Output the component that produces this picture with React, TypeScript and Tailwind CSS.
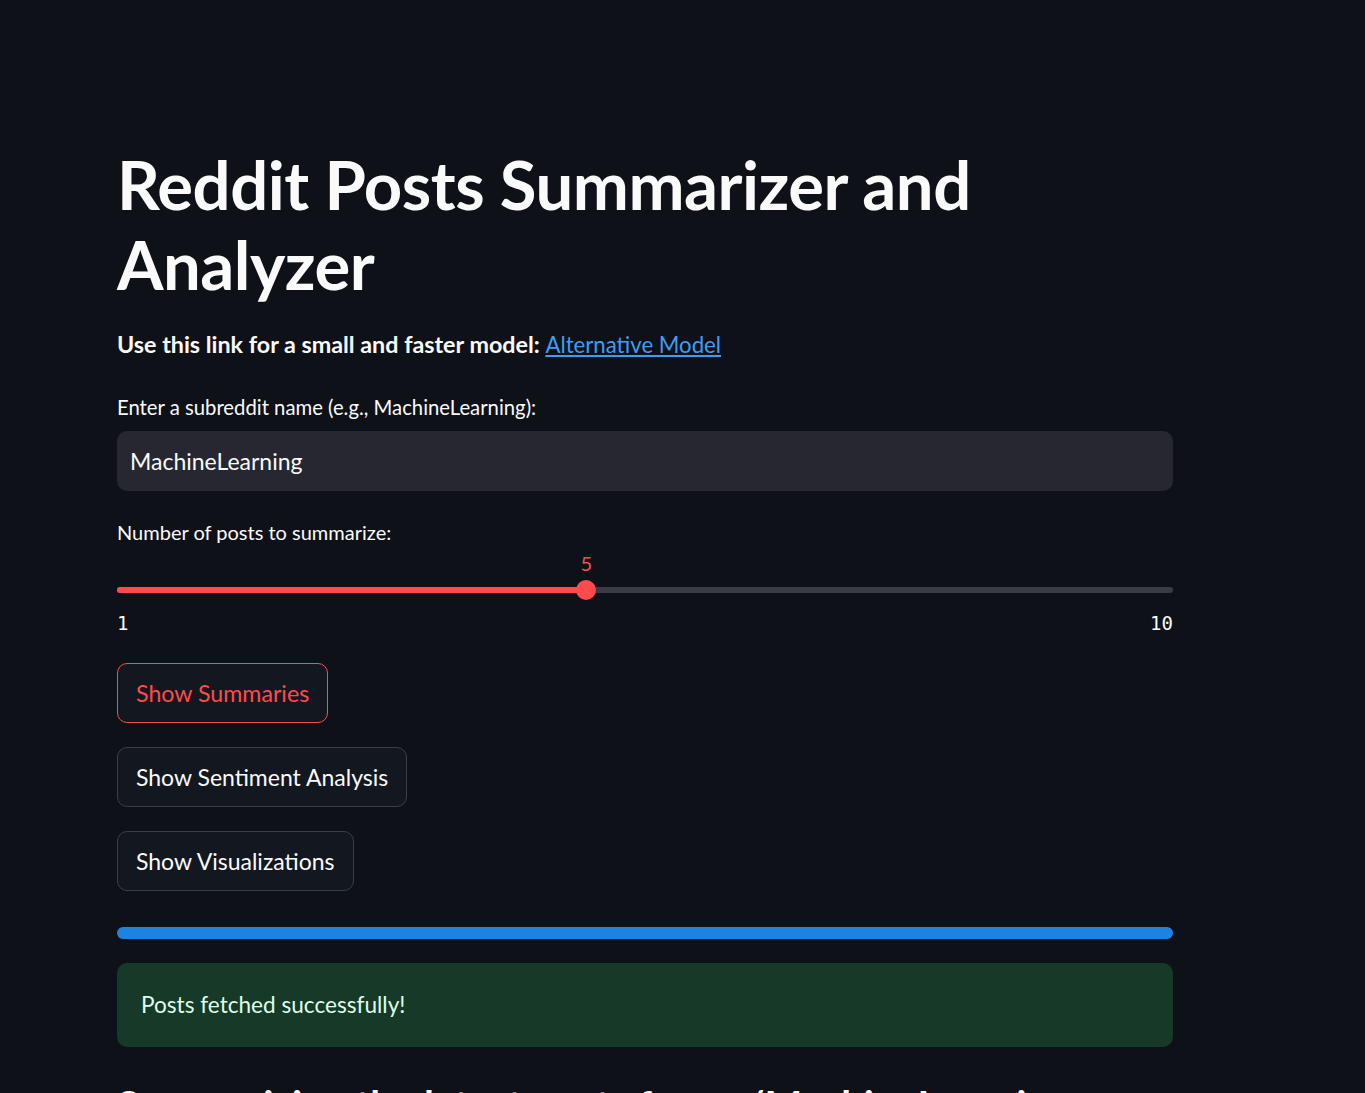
import React from 'react';

const sans = "font-['Lato','Noto_Sans',sans-serif]";

export default function App() {
  const value = 5;
  const min = 1;
  const max = 10;
  const pct = ((value - min) / (max - min)) * 100;

  return (
    <div className={`min-h-[1093px] bg-[#0e1117] text-[#fafafa] ${sans} overflow-hidden`}>
      <div className="w-[1056px] ml-[117px] pt-[144px]">
        {/* Title */}
        <h1 className="text-[67px] font-bold leading-[80px] tracking-[-0.5px] text-[#fafafa]">
          Reddit Posts Summarizer and
          <br />
          Analyzer
        </h1>

        <p className="mt-[23px] text-[23.3px] leading-[34px] font-bold">
          Use this link for a small and faster model:{' '}
          <a href="#" className="font-normal text-[22.2px] text-[#3d9df3] underline underline-offset-2">
            Alternative Model
          </a>
        </p>

        {/* Subreddit input */}
        <label className="block mt-[31px] text-[20.3px] leading-[28px] text-[#fafafa]">
          Enter a subreddit name (e.g., MachineLearning):
        </label>
        <div className="mt-[10px] h-[60px] rounded-[10px] bg-[#262730] flex items-center px-[13px]">
          <span className="text-[23px] text-[#fafafa]">MachineLearning</span>
        </div>

        {/* Slider */}
        <label className="block mt-[27px] text-[20px] leading-[28px]">
          Number of posts to summarize:
        </label>
        <div className="relative mt-[10px] h-[40px]">
          <div className="absolute top-[31px] left-0 right-0 h-[6px] rounded-full bg-[#3a3c44]" />
          <div
            className="absolute top-[31px] left-0 h-[6px] rounded-full bg-[#ff4b4b]"
            style={{ width: `${pct}%` }}
          />
          <div
            className="absolute top-[24px] -ml-[10px] w-[20px] h-[20px] rounded-full bg-[#ff4b4b]"
            style={{ left: `${pct}%` }}
          />
          <span
            className="absolute top-[-7px] -translate-x-1/2 text-[20px] leading-[28px] text-[#ff4b4b]"
            style={{ left: `${pct}%` }}
          >
            {value}
          </span>
        </div>
        <div className="mt-[13px] flex justify-between font-['DejaVu_Sans_Mono',monospace] text-[19px] leading-[28px] text-[#fafafa]">
          <span>{min}</span>
          <span>{max}</span>
        </div>

        {/* Buttons */}
        <div className="mt-[26px] flex flex-col items-start gap-[24px]">
          <button className="h-[60px] px-[18px] rounded-[10px] border border-[#ff4b4b] bg-[#131720] text-[23.2px] text-[#ff4b4b]">
            Show Summaries
          </button>
          <button className="h-[60px] px-[18px] rounded-[10px] border border-[#3b3e47] bg-[#131720] text-[23px] text-[#fafafa]">
            Show Sentiment Analysis
          </button>
          <button className="h-[60px] px-[18px] rounded-[10px] border border-[#3b3e47] bg-[#131720] text-[23px] text-[#fafafa]">
            Show Visualizations
          </button>
        </div>

        {/* Progress */}
        <div className="mt-[36px] h-[12px] rounded-full bg-[#1c83e1]" />

        {/* Success */}
        <div className="mt-[24px] h-[84px] rounded-[10px] bg-[#173928] flex items-center px-[24px]">
          <span className="text-[22.6px] text-[#dffde9]">Posts fetched successfully!</span>
        </div>

        <h2 className="mt-[34px] text-[40px] font-bold leading-[48px] text-[#fafafa]">
          Summarizing the latest posts from r/MachineLearning
        </h2>
      </div>
    </div>
  );
}
